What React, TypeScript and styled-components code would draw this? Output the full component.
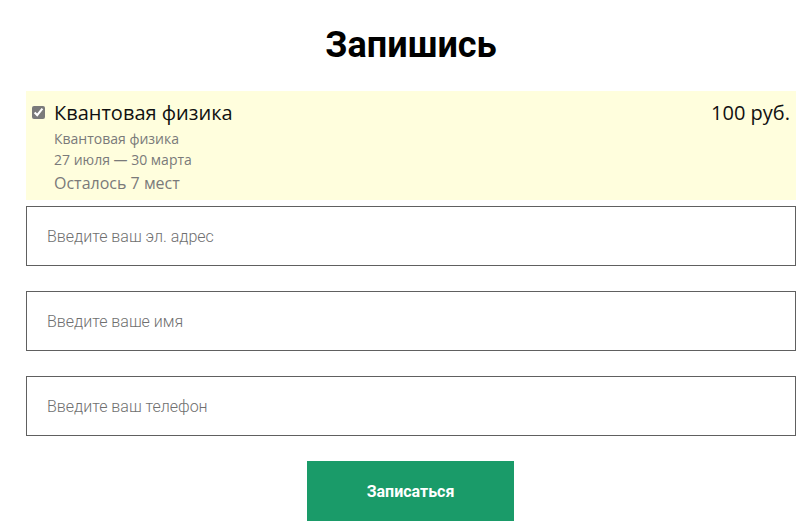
import React from "react";
import styled, { createGlobalStyle } from "styled-components";

const Global = createGlobalStyle`
  html, body { margin: 0; padding: 0; background: #fff; }
  body { font-family: "Open Sans", sans-serif; }
  * { box-sizing: border-box; }
`;

const Page = styled.div`
  width: 770px;
  margin-left: 26px;
  display: flex;
  flex-direction: column;
`;

const Title = styled.h1`
  margin: 22px 0 0;
  height: 69px;
  font-family: Roboto, sans-serif;
  font-weight: 700;
  font-size: 36px;
  line-height: 46px;
  text-align: center;
  color: #000;
`;

const Course = styled.div`
  background: #fffedd;
  height: 109px;
  padding: 8px 6px 0 6px;
  display: flex;
  align-items: flex-start;
`;

const Check = styled.input`
  margin: 7px 9px 0 0;
  width: 13px;
  height: 13px;
  accent-color: #7a7a7a;
`;

const Info = styled.div`
  flex: 1;
  display: flex;
  flex-direction: column;
`;

const Name = styled.div`
  font-size: 20px;
  line-height: 27px;
  margin-bottom: 2px;
  color: #111;
`;

const Sub = styled.div<{ $size?: number; $lh?: number; $top?: number }>`
  font-size: ${(p) => p.$size ?? 14}px;
  line-height: ${(p) => p.$lh ?? 21}px;
  margin-top: ${(p) => p.$top ?? 0}px;
  color: #7a7a7a;
`;

const Price = styled.div`
  font-size: 20px;
  line-height: 27px;
  color: #111;
`;

const Field = styled.input`
  width: 100%;
  height: 60px;
  border: 1px solid #606060;
  padding: 0 20px;
  font-family: Roboto, sans-serif;
  font-weight: 300;
  font-size: 16px;
  color: #333;
  outline: none;
  &::placeholder { color: #6f6f6f; }
`;

const Fields = styled.div`
  margin-top: 6px;
  display: flex;
  flex-direction: column;
  gap: 25px;
`;

const Submit = styled.button`
  align-self: center;
  margin: 25px 1px 0 0;
  width: 207px;
  height: 60px;
  border: none;
  background: #1a9b69;
  color: #fff;
  font-family: Roboto, sans-serif;
  font-weight: 700;
  font-size: 16px;
  cursor: pointer;
`;

export default function App() {
  return (
    <>
      <Global />
      <Page>
        <Title>Запишись</Title>
        <Course>
          <Check type="checkbox" defaultChecked />
          <Info>
            <Name>Квантовая физика</Name>
            <Sub>Квантовая физика</Sub>
            <Sub>27 июля — 30 марта</Sub>
            <Sub $size={16} $lh={25} $top={1}>Осталось 7 мест</Sub>
          </Info>
          <Price>100 руб.</Price>
        </Course>
        <Fields>
          <Field placeholder="Введите ваш эл. адрес" />
          <Field placeholder="Введите ваше имя" />
          <Field placeholder="Введите ваш телефон" />
        </Fields>
        <Submit>Записаться</Submit>
      </Page>
    </>
  );
}
